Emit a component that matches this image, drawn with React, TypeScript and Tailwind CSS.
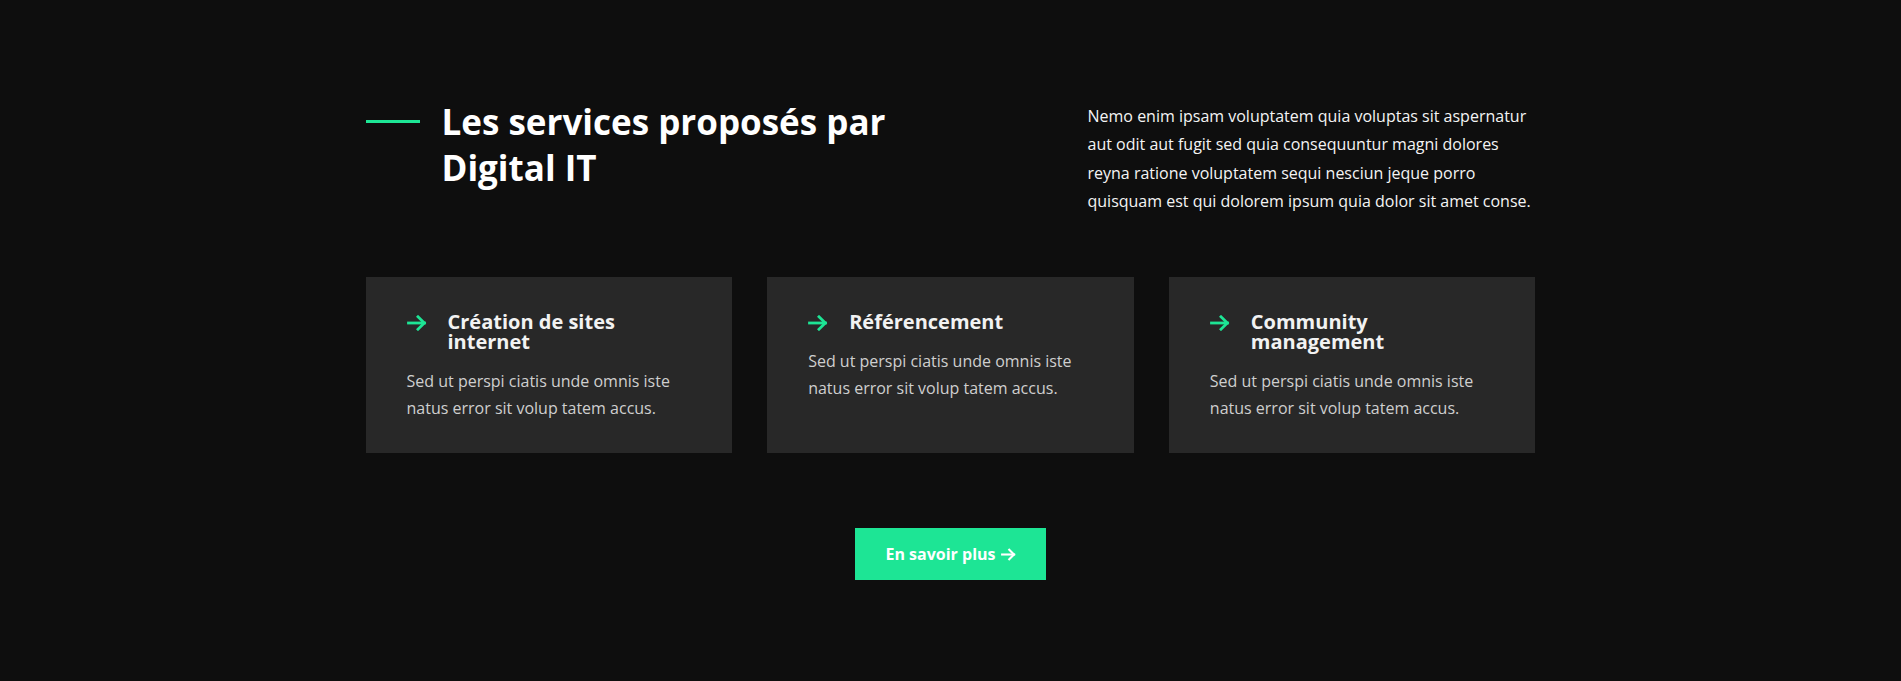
const Arrow = ({ className }: { className?: string }) => (
  <svg viewBox="0 0 20 16" className={className} fill="none" stroke="currentColor" strokeWidth="2.8" strokeLinecap="square">
    <path d="M1.5 8h16" />
    <path d="M11 1.8L17.3 8 11 14.2" />
  </svg>
);

const services = [
  { title: 'Création de sites internet' },
  { title: 'Référencement' },
  { title: 'Community management' },
];

const App = () => {
  return (
    <div className="min-h-screen bg-[#0e0e0e] font-['Open_Sans',sans-serif]">
      <div className="mx-auto w-[1170px] pt-[99px] pb-[101px]">
        <div className="flex items-start justify-between">
          <div className="flex items-start">
            <div className="mt-[21px] h-[3px] w-[54px] bg-[#1de595]" />
            <h2 className="ml-[22px] w-[460px] text-[35px] font-bold leading-[46px] text-white">
              Les services proposés par Digital IT
            </h2>
          </div>
          <p className="mt-[3px] w-[448px] text-[16px] leading-[28.3px] text-[#f4f4f4]">
            Nemo enim ipsam voluptatem quia voluptas sit aspernatur aut odit aut fugit sed quia consequuntur magni dolores
            reyna ratione voluptatem sequi nesciun jeque porro quisquam est qui dolorem ipsum quia dolor sit amet conse.
          </p>
        </div>

        <div className="mt-[62px] grid grid-cols-3 gap-[35px]">
          {services.map((s) => (
            <div key={s.title} className="bg-[#282828] pl-[41px] pr-[41px] pt-[35px] pb-[31px]">
              <div className="flex items-start">
                <Arrow className="mt-[3px] h-4 w-5 shrink-0 text-[#1de595]" />
                <h3 className="ml-[21px] text-[20px] font-bold leading-[20px] text-[#f2f2f2]">{s.title}</h3>
              </div>
              <p className="mt-4 text-[16px] leading-[27px] text-[#cfcfcf]">
                Sed ut perspi ciatis unde omnis iste natus error sit volup tatem accus.
              </p>
            </div>
          ))}
        </div>

        <div className="mt-[75px] flex justify-center">
          <button className="flex h-[52px] w-[191px] items-center justify-center gap-[5px] bg-[#1de595] text-[16px] font-bold text-white">
            En savoir plus
            <Arrow className="h-[13px] w-[15px]" />
          </button>
        </div>
      </div>
    </div>
  );
};

export default App;
